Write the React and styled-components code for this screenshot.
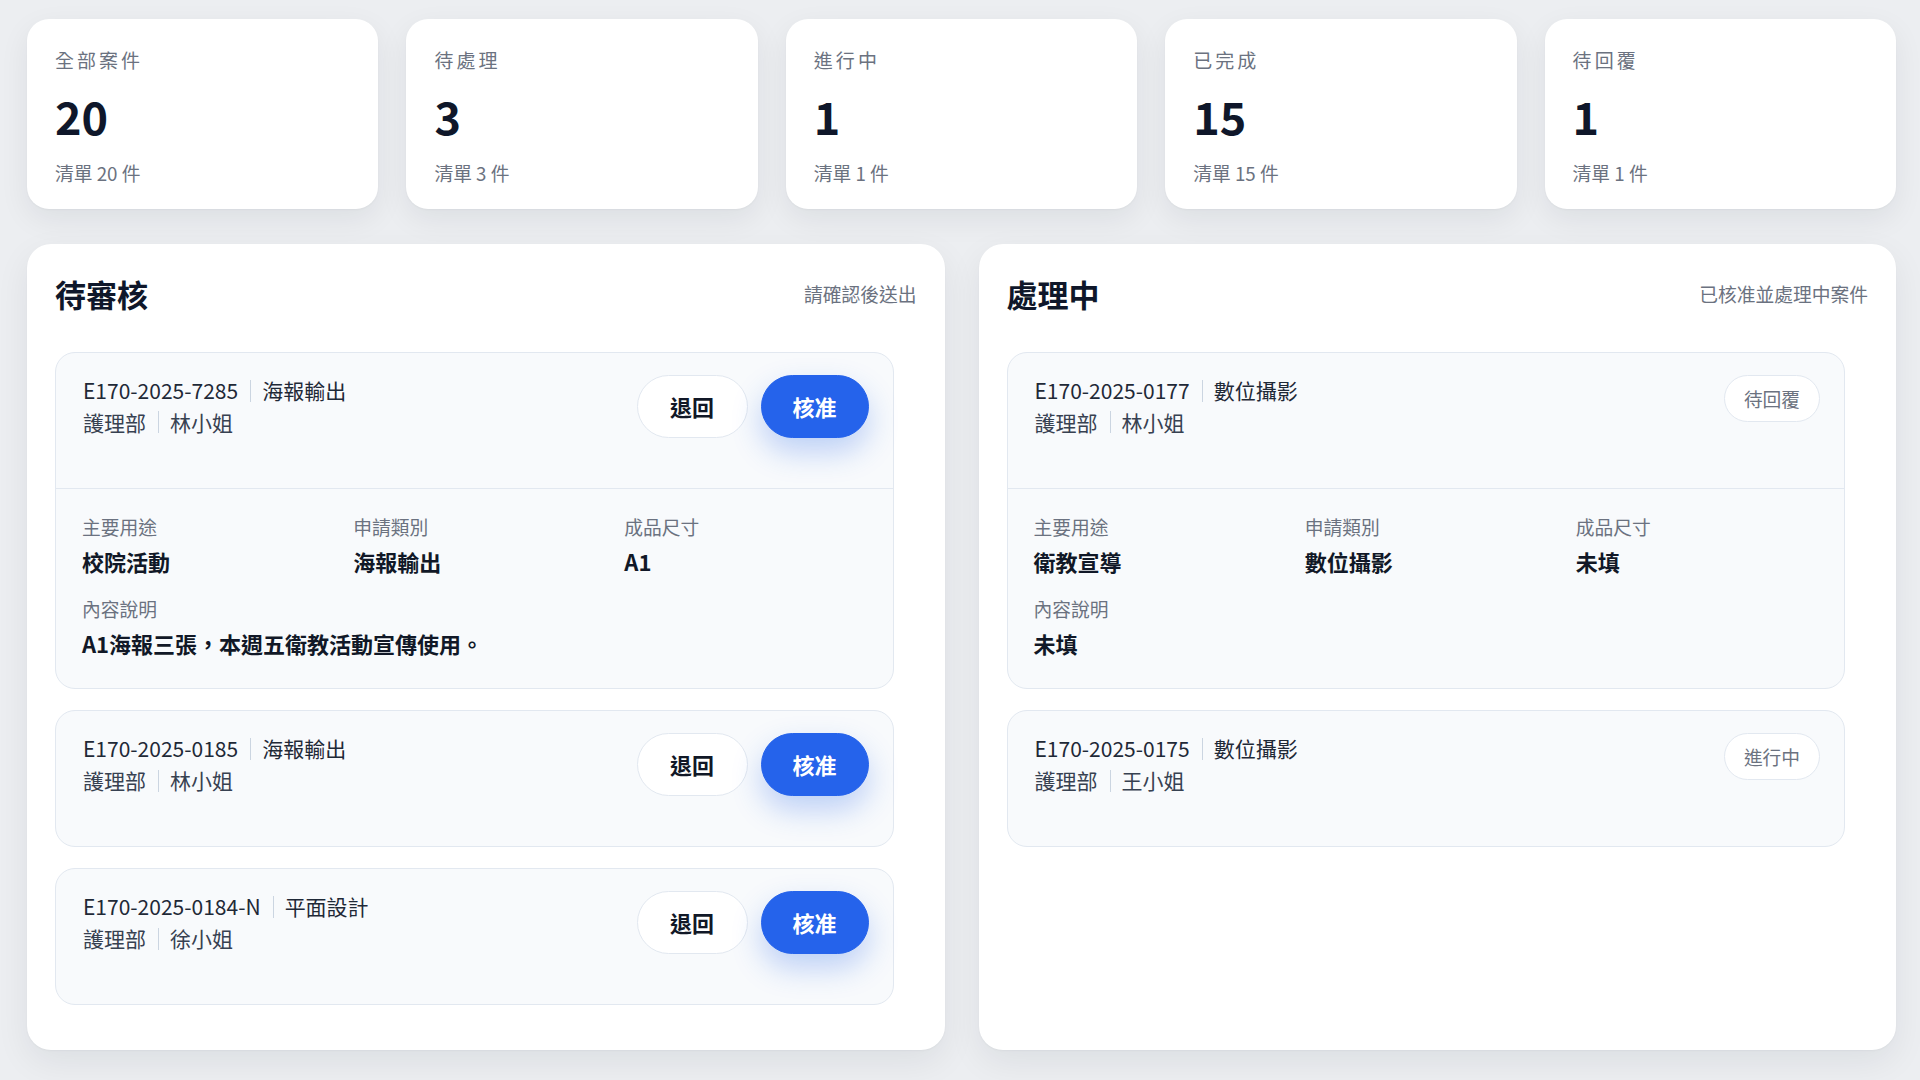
import React from 'react';
import styled, { createGlobalStyle } from 'styled-components';

const GlobalStyle = createGlobalStyle`
  * { box-sizing: border-box; }
  body {
    margin: 0;
    background: #eceef1;
    font-family: "Noto Sans CJK TC", "Noto Sans", sans-serif;
    color: #111827;
  }
`;

const stats = [
  { label: '全部案件', value: 20, note: '清單 20 件' },
  { label: '待處理', value: 3, note: '清單 3 件' },
  { label: '進行中', value: 1, note: '清單 1 件' },
  { label: '已完成', value: 15, note: '清單 15 件' },
  { label: '待回覆', value: 1, note: '清單 1 件' },
];

const pending = [
  {
    id: 'E170-2025-7285', type: '海報輸出', dept: '護理部', person: '林小姐',
    detail: { use: '校院活動', category: '海報輸出', size: 'A1', desc: 'A1海報三張，本週五衛教活動宣傳使用。' },
  },
  { id: 'E170-2025-0185', type: '海報輸出', dept: '護理部', person: '林小姐' },
  { id: 'E170-2025-0184-N', type: '平面設計', dept: '護理部', person: '徐小姐' },
];

const processing = [
  {
    id: 'E170-2025-0177', type: '數位攝影', dept: '護理部', person: '林小姐', status: '待回覆',
    detail: { use: '衛教宣導', category: '數位攝影', size: '未填', desc: '未填' },
  },
  { id: 'E170-2025-0175', type: '數位攝影', dept: '護理部', person: '王小姐', status: '進行中' },
];

const App = () => {
  return (
    <Page>
      <GlobalStyle />
      <StatsRow>
        {stats.map((s) => (
          <StatCard key={s.label}>
            <StatLabel>{s.label}</StatLabel>
            <StatValue>{s.value}</StatValue>
            <StatNote>{s.note}</StatNote>
          </StatCard>
        ))}
      </StatsRow>

      <PanelsRow>
        <Panel>
          <PanelHead>
            <PanelTitle>待審核</PanelTitle>
            <PanelNote>請確認後送出</PanelNote>
          </PanelHead>
          <CaseList>
            {pending.map((c) => (
              <CaseCard key={c.id}>
                <CaseHead>
                  <CaseMeta c={c} />
                  <Actions>
                    <ActionButton>退回</ActionButton>
                    <ActionButton $primary>核准</ActionButton>
                  </Actions>
                </CaseHead>
                {c.detail && <CaseDetail d={c.detail} />}
              </CaseCard>
            ))}
          </CaseList>
        </Panel>

        <Panel>
          <PanelHead>
            <PanelTitle>處理中</PanelTitle>
            <PanelNote>已核准並處理中案件</PanelNote>
          </PanelHead>
          <CaseList>
            {processing.map((c) => (
              <CaseCard key={c.id}>
                <CaseHead>
                  <CaseMeta c={c} />
                  <Badge>{c.status}</Badge>
                </CaseHead>
                {c.detail && <CaseDetail d={c.detail} />}
              </CaseCard>
            ))}
          </CaseList>
        </Panel>
      </PanelsRow>
    </Page>
  );
};

const CaseMeta = ({ c }) => (
  <Meta>
    <MetaLine>
      {c.id}<Sep />{c.type}
    </MetaLine>
    <MetaLine $muted>
      {c.dept}<Sep />{c.person}
    </MetaLine>
  </Meta>
);

const CaseDetail = ({ d }) => (
  <Detail>
    <Field>
      <FieldLabel>主要用途</FieldLabel>
      <FieldValue>{d.use}</FieldValue>
    </Field>
    <Field>
      <FieldLabel>申請類別</FieldLabel>
      <FieldValue>{d.category}</FieldValue>
    </Field>
    <Field>
      <FieldLabel>成品尺寸</FieldLabel>
      <FieldValue>{d.size}</FieldValue>
    </Field>
    <Field $wide>
      <FieldLabel>內容說明</FieldLabel>
      <FieldValue>{d.desc}</FieldValue>
    </Field>
  </Detail>
);

const Page = styled.div`
  min-height: 100vh;
  padding: 19px 24px 29px 27px;
`;

const StatsRow = styled.div`
  display: grid;
  grid-template-columns: repeat(5, 1fr);
  gap: 28px;
`;

const StatCard = styled.div`
  background: #fff;
  border-radius: 22px;
  padding: 28px 28px 22px;
  height: 190px;
  box-shadow: 0 10px 30px rgba(15, 23, 42, 0.07), 0 1px 2px rgba(15, 23, 42, 0.04);
`;

const StatLabel = styled.div`
  font-size: 19px;
  line-height: 1.4;
  letter-spacing: 0.16em;
  color: #6b7280;
  margin-bottom: 15px;
`;

const StatValue = styled.div`
  font-size: 45px;
  line-height: 1.2;
  font-weight: 700;
  color: #0f172a;
  margin-bottom: 17px;
`;

const StatNote = styled.div`
  font-size: 18.75px;
  line-height: 1.4;
  color: #6b7280;
`;

const PanelsRow = styled.div`
  display: grid;
  grid-template-columns: 1fr 1fr;
  gap: 34px;
  margin-top: 35px;
`;

const Panel = styled.section`
  background: #fff;
  border-radius: 24px;
  padding: 29px 28px 45px;
  box-shadow: 0 12px 34px rgba(15, 23, 42, 0.07), 0 1px 2px rgba(15, 23, 42, 0.04);
`;

const PanelHead = styled.div`
  display: flex;
  align-items: center;
  justify-content: space-between;
`;

const PanelTitle = styled.h2`
  margin: 0;
  font-size: 31px;
  line-height: 1.36;
  font-weight: 700;
  color: #0f172a;
`;

const PanelNote = styled.span`
  font-size: 18.75px;
  line-height: 1.4;
  color: #6b7280;
`;

const CaseList = styled.div`
  display: flex;
  flex-direction: column;
  gap: 21px;
  margin-top: 37px;
  padding-right: 23px;
`;

const CaseCard = styled.div`
  background: #f8fafc;
  border: 1px solid #e2e8f0;
  border-radius: 20px;
`;

const CaseHead = styled.div`
  display: flex;
  justify-content: space-between;
  align-items: flex-start;
  min-height: 135px;
  padding: 22px 24px 22px 27px;
`;

const Meta = styled.div`
  display: flex;
  flex-direction: column;
`;

const MetaLine = styled.div`
  font-size: 21px;
  line-height: 1.5;
  color: ${(p) => (p.$muted ? '#374151' : '#1f2937')};
  display: flex;
  align-items: center;
`;

const Sep = styled.span`
  display: inline-block;
  width: 1px;
  height: 22px;
  background: #cbd5e1;
  margin: 0 11px 0 12px;
`;

const Actions = styled.div`
  display: flex;
  gap: 13px;
`;

const ActionButton = styled.button`
  font-family: inherit;
  font-size: 22px;
  font-weight: 700;
  line-height: 1.5;
  height: 63px;
  width: ${(p) => (p.$primary ? '108px' : '111px')};
  border-radius: 999px;
  cursor: pointer;
  border: 1px solid ${(p) => (p.$primary ? '#2563eb' : '#e2e8f0')};
  background: ${(p) => (p.$primary ? '#2563eb' : '#fff')};
  color: ${(p) => (p.$primary ? '#fff' : '#111827')};
  box-shadow: ${(p) => (p.$primary ? '0 14px 30px rgba(37, 99, 235, 0.28)' : 'none')};
`;

const Badge = styled.span`
  display: inline-flex;
  align-items: center;
  justify-content: center;
  width: 96px;
  height: 47px;
  border-radius: 999px;
  background: #fff;
  border: 1px solid #e2e8f0;
  font-size: 18.75px;
  color: #6b7280;
`;

const Detail = styled.div`
  display: grid;
  grid-template-columns: repeat(3, 1fr);
  column-gap: 27px;
  row-gap: 19px;
  border-top: 1px solid #e2e8f0;
  padding: 25px 24px 29px 26px;
`;

const Field = styled.div`
  grid-column: ${(p) => (p.$wide ? '1 / -1' : 'auto')};
`;

const FieldLabel = styled.div`
  font-size: 18.75px;
  line-height: 1.4;
  color: #6b7280;
  margin-bottom: 6px;
`;

const FieldValue = styled.div`
  font-size: 22px;
  line-height: 1.4;
  font-weight: 700;
  color: #111827;
`;

export default App;
